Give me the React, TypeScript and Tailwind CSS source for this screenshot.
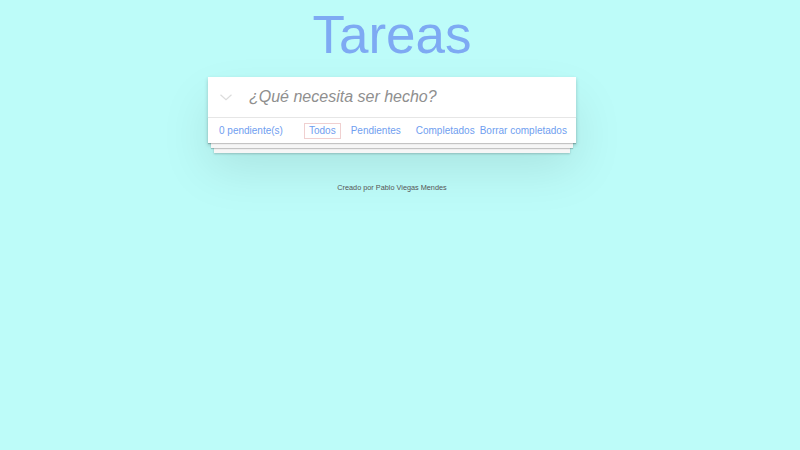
import React from "react";

export default function App() {
  return (
    <div
      className="min-h-[450px] w-full bg-[#bdfcf9] flex flex-col items-center pr-[16px]"
      style={{ fontFamily: '"Liberation Sans", Arial, sans-serif' }}
    >
      <h1 className="mt-[9px] text-[53px] leading-[52px] font-normal text-[#7eaaf3]">Tareas</h1>
      <div className="mt-[16px] w-[368px] bg-white shadow-[0_2px_4px_0_rgba(0,0,0,0.2),0_25px_50px_0_rgba(0,0,0,0.1)]">
        <div className="h-[40px] flex items-center">
          <svg className="ml-[12px]" width="12" height="7" viewBox="0 0 12 7" fill="none">
            <path d="M0.5 0.8 L6 5.8 L11.5 0.8" stroke="#dcdcdc" strokeWidth="1.2" />
          </svg>
          <span className="ml-[17px] text-[16px] italic text-[#8f8f8f]">¿Qué necesita ser hecho?</span>
        </div>
        <div className="relative h-[26px] border-t border-[#e6e6e6] flex items-center pl-[11px] pr-[10px] text-[10px] text-[#6f9ef0] whitespace-nowrap bg-white shadow-[0_1px_1px_rgba(0,0,0,0.2),0_8px_0_-3px_#f6f6f6,0_9px_1px_-3px_rgba(0,0,0,0.2),0_16px_0_-6px_#f6f6f6,0_17px_2px_-6px_rgba(0,0,0,0.2)]">
          <span className="w-[85px] shrink-0">0 pendiente(s)</span>
          <span className="px-[4px] h-[16px] flex items-center border border-[#f0d0d0]">Todos</span>
          <span className="ml-[5px] px-[4px] h-[16px] flex items-center border border-transparent">Pendientes</span>
          <span className="ml-[5px] px-[4px] h-[16px] flex items-center border border-transparent">Completados</span>
          <span>Borrar completados</span>
        </div>
      </div>
      <p className="mt-[40px] text-[7.3px] text-[#555]">Creado por Pablo Viegas Mendes</p>
    </div>
  );
}
